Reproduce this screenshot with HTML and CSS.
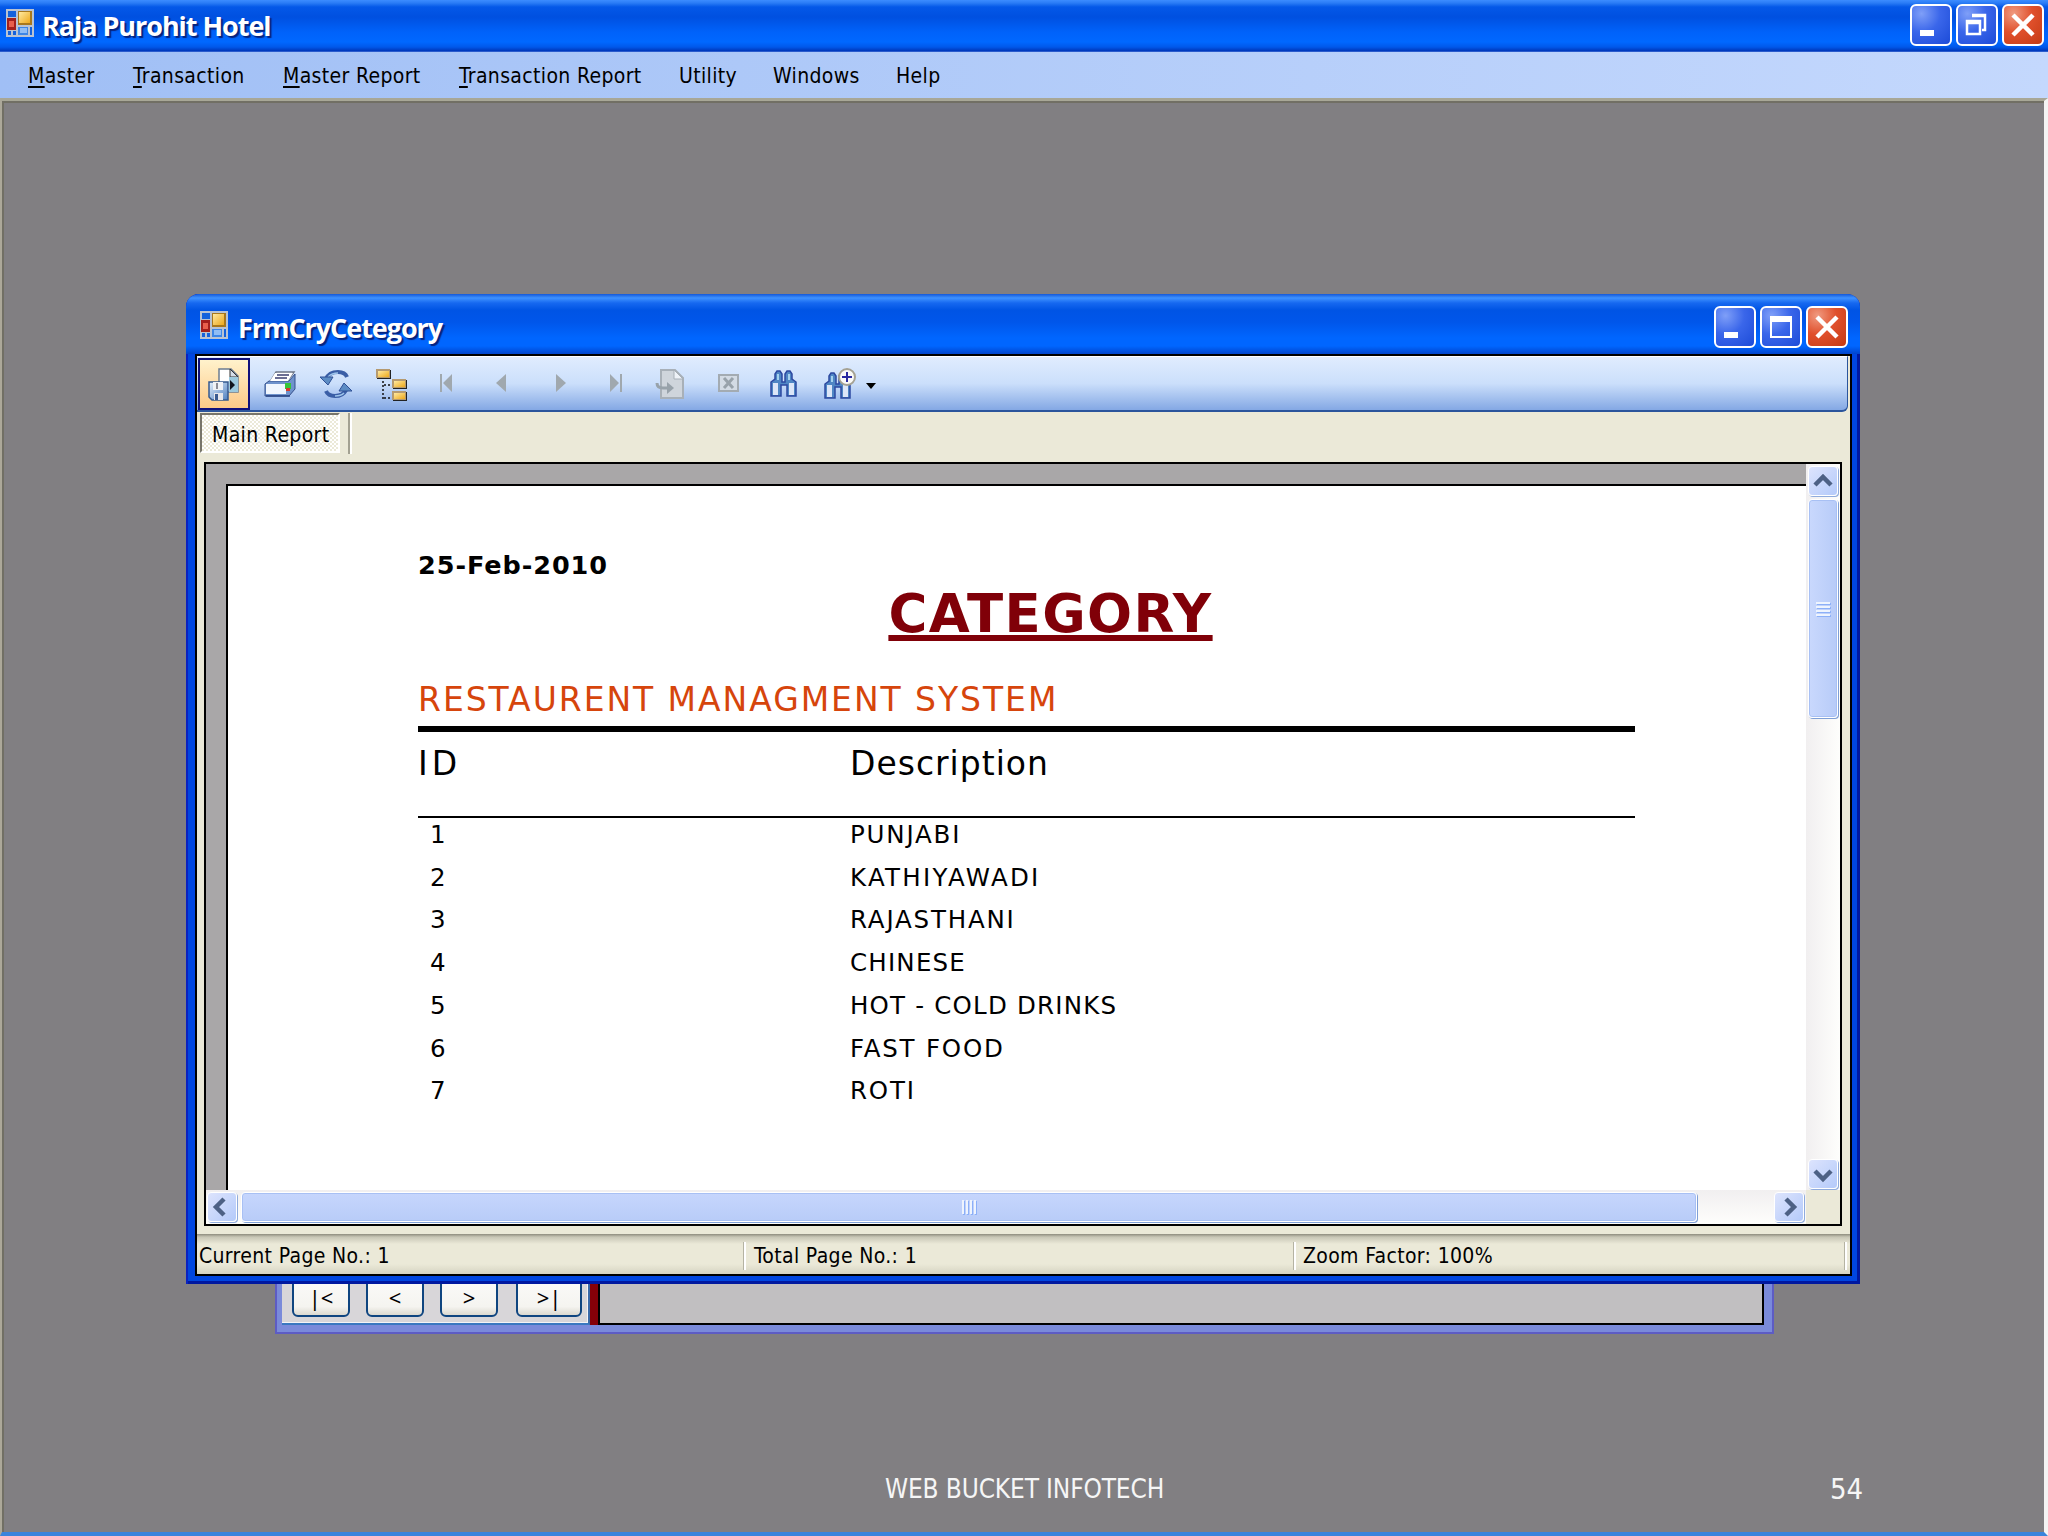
FILE: index.html
```
<!DOCTYPE html>
<html lang="en">
<head>
    <meta charset="UTF-8">
    <title>Raja Purohit Hotel</title>
    <link rel="stylesheet" href="styles.css">
</head>
<body>

    <!-- shared shapes -->
    <svg class="defs" width="0" height="0">
        <defs>
            <linearGradient id="gold" x1="0" y1="0" x2="1" y2="1">
                <stop offset="0" stop-color="#ffe9a0"/>
                <stop offset="1" stop-color="#eda91c"/>
            </linearGradient>
            <linearGradient id="steel" x1="0" y1="0" x2="1" y2="1">
                <stop offset="0" stop-color="#e4f0fc"/>
                <stop offset="1" stop-color="#4f7fc0"/>
            </linearGradient>
            <symbol id="form-icon" viewBox="0 0 28 28">
                <rect width="28" height="28" fill="#b9c3d2"/>
                <rect x="2" y="2" width="8" height="6" fill="#1462dc"/>
                <rect x="12" y="2" width="14" height="14" fill="#a8781c"/>
                <rect x="13" y="3" width="11" height="11" fill="url(#gold)"/>
                <rect x="1" y="9" width="9" height="12" fill="#a3201c"/>
                <rect x="3" y="12" width="5" height="6" fill="#e8604c"/>
                <rect x="2" y="22" width="3" height="4" fill="#1462dc"/>
                <rect x="7" y="22" width="3" height="4" fill="#1462dc"/>
                <rect x="12" y="18" width="10" height="8" fill="#3d86e6"/>
                <rect x="14" y="19" width="7" height="5" fill="#8fbdf5"/>
                <rect x="24" y="18" width="2" height="8" fill="#1462dc"/>
            </symbol>
            <symbol id="binoculars" viewBox="0 0 28 28">
                <path d="M5 9V4l2-3h3l2 3v8h3V4l2-3h3l2 3v5l4 3v14H17V15h-6v11H1V12z" fill="#4f86c4" stroke="#2c48a0" stroke-width="1.5"/>
                <path d="M3 13h5v12H3zM19 13h5v12h-5z" fill="#dce6f8"/>
                <path d="M7 4h2v6H7zM18 4h2v6h-2z" fill="#a5d2ee"/>
            </symbol>
        </defs>
    </svg>

    <div class="title-bar">
        <svg class="app-icon"><use href="#form-icon"/></svg>
        <span class="title-text">Raja Purohit Hotel</span>
        <div class="caption-buttons">
            <div class="caption-btn"><svg viewBox="0 0 42 42"><rect x="10" y="26" width="14" height="6" fill="#fff"/></svg></div>
            <div class="caption-btn"><svg viewBox="0 0 42 42"><path d="M16 11h13v15h-3M16 12h13" fill="none" stroke="#fff" stroke-width="2.5"/><path d="M11 17h13v13H11zM11 19h13" fill="none" stroke="#fff" stroke-width="2.5"/></svg></div>
            <div class="caption-btn close-btn"><svg viewBox="0 0 42 42"><path d="M11 11l20 20M31 11L11 31" stroke="#fff" stroke-width="4.5"/></svg></div>
        </div>
    </div>

    <div class="menu-bar">
        <span class="m1"><u>M</u>aster</span>
        <span class="m2"><u>T</u>ransaction</span>
        <span class="m3"><u>M</u>aster Report</span>
        <span class="m4"><u>T</u>ransaction Report</span>
        <span class="m5">Utility</span>
        <span class="m6">Windows</span>
        <span class="m7">Help</span>
    </div>

    <div class="workspace">

        <!-- form lying behind the report -->
        <div class="back-window">
            <div class="nav-panel">
                <button>|&lt;</button>
                <button>&lt;</button>
                <button>&gt;</button>
                <button class="wide">&gt;|</button>
            </div>
            <div class="grid-area"></div>
        </div>

        <div class="report-window">
            <div class="report-title">
                <svg class="app-icon"><use href="#form-icon"/></svg>
                <span class="title-text">FrmCryCetegory</span>
                <div class="caption-buttons">
                    <div class="caption-btn"><svg viewBox="0 0 42 42"><rect x="10" y="26" width="14" height="6" fill="#fff"/></svg></div>
                    <div class="caption-btn"><svg viewBox="0 0 42 42"><path d="M11 11h20v20H11z" fill="none" stroke="#fff" stroke-width="2"/><rect x="10" y="10" width="22" height="6" fill="#fff"/></svg></div>
                    <div class="caption-btn close-btn"><svg viewBox="0 0 42 42"><path d="M11 11l20 20M31 11L11 31" stroke="#fff" stroke-width="4.5"/></svg></div>
                </div>
            </div>

            <div class="client">
                <div class="toolbar">
                    <div class="tool active">
                        <svg viewBox="0 0 32 32">
                            <path d="M11 0h12l7 7v16H11z" fill="#fff" stroke="#6c7c90" stroke-width="1.5"/>
                            <path d="M22 0v8h8z" fill="#d5dde8" stroke="#333" stroke-width="1"/>
                            <path d="M21 8h9v15h-9z" fill="#9cc8dc"/>
                            <path d="M22 11l5 5-5 5z" fill="#10141c"/>
                            <path d="M1 13h19v18H4l-3-3z" fill="url(#steel)" stroke="#35598f" stroke-width="1.5"/>
                            <rect x="5" y="13" width="10" height="8" fill="#f0f2f6"/>
                            <rect x="8" y="14" width="2" height="6" fill="#8c8c96"/>
                            <rect x="6" y="24" width="9" height="7" fill="#e6e6ea"/>
                            <rect x="7" y="25" width="3" height="6" fill="#3a5a90"/>
                        </svg>
                    </div>
                    <div class="tool">
                        <svg viewBox="0 0 32 32">
                            <path d="M6 13L12 3h18l-7 10z" fill="#fff" stroke="#6d7686" stroke-width="1.5"/>
                            <path d="M14 6h12M11 9h12" stroke="#3b3f70" stroke-width="1.5"/>
                            <path d="M1 15l4-3h20l6-7v15l-6 7H1z" fill="#6f93cc" stroke="#35508c" stroke-width="1"/>
                            <path d="M6 12l5-8h18l-5 8z" fill="#fff"/>
                            <path d="M13 6h12M11 9h12" stroke="#3b3f70" stroke-width="1.5"/>
                            <rect x="2" y="15" width="20" height="10" fill="#f0f6fe"/>
                            <rect x="21" y="14" width="6" height="6" fill="#37c43a"/>
                            <rect x="22" y="19" width="4" height="3" fill="#d83a2a"/>
                            <path d="M2 27h24" stroke="#2a4484" stroke-width="1.5"/>
                        </svg>
                    </div>
                    <div class="tool">
                        <svg viewBox="0 0 32 32">
                            <path d="M6 10Q9 3 18 3q7 0 9 5" fill="none" stroke="#3a5ea6" stroke-width="4"/>
                            <path d="M8 8Q12 4 18 4" fill="none" stroke="#9dc4ea" stroke-width="1.5"/>
                            <path d="M0 8h13l-5 8z" fill="#5c8cc4" stroke="#2f5096"/>
                            <path d="M26 21q-3 6-11 6-7 0-9-5" fill="none" stroke="#3a5ea6" stroke-width="4"/>
                            <path d="M24 24q-3 3-9 3" fill="none" stroke="#9dc4ea" stroke-width="1.5"/>
                            <path d="M32 22H19l5-8z" fill="#5c8cc4" stroke="#2f5096"/>
                        </svg>
                    </div>
                    <div class="tool">
                        <svg viewBox="0 0 32 32">
                            <path d="M7 12v18M8 16h9M8 29h9" fill="none" stroke="#111" stroke-width="1.5" stroke-dasharray="2 2"/>
                            <g fill="#222"><rect x="1" y="1" width="14" height="9"/><rect x="17" y="11" width="14" height="9"/><rect x="17" y="23" width="14" height="9"/></g>
                            <g fill="#b59a70"><rect x="0" y="0" width="14" height="9"/><rect x="16" y="10" width="14" height="9"/><rect x="16" y="22" width="14" height="9"/></g>
                            <g fill="url(#gold)"><rect x="2" y="2" width="11" height="6"/><rect x="18" y="12" width="11" height="6"/><rect x="18" y="24" width="11" height="6"/></g>
                        </svg>
                    </div>
                    <div class="tool"><svg viewBox="0 0 32 32"><path d="M8 5h2v18H8zM20 5v18l-9-9z" fill="#a0a8ae"/></svg></div>
                    <div class="tool"><svg viewBox="0 0 32 32"><path d="M18 5v18l-10-9z" fill="#a0a8ae"/></svg></div>
                    <div class="tool"><svg viewBox="0 0 32 32"><path d="M12 5v18l10-9z" fill="#a0a8ae"/></svg></div>
                    <div class="tool"><svg viewBox="0 0 32 32"><path d="M20 5h2v18h-2zM10 5v18l9-9z" fill="#a0a8ae"/></svg></div>
                    <div class="tool">
                        <svg viewBox="0 0 32 32">
                            <path d="M5 1h14l8 8v20H5z" fill="#cfd5dc" stroke="#a8b0b8" stroke-width="2"/>
                            <path d="M18 1v9h9z" fill="#eef2f8" stroke="#a8b0b8"/>
                            <path d="M1 14q0 5 6 5h5" fill="none" stroke="#98a2aa" stroke-width="3"/>
                            <path d="M11 13l7 6-7 6z" fill="#98a2aa"/>
                        </svg>
                    </div>
                    <div class="tool">
                        <svg viewBox="0 0 32 32">
                            <rect x="7" y="6" width="19" height="16" fill="#d3dbe4" stroke="#a3abb2" stroke-width="2"/>
                            <path d="M12 9l9 10M21 9l-9 10" stroke="#98a2aa" stroke-width="3"/>
                        </svg>
                    </div>
                    <div class="tool"><svg viewBox="0 0 32 32"><use href="#binoculars" x="2" y="1" width="28" height="28"/></svg></div>
                    <div class="tool">
                        <svg viewBox="0 0 32 32">
                            <use href="#binoculars" x="0" y="3" width="28" height="28"/>
                            <circle cx="23" cy="8" r="8" fill="#fafaf8" stroke="#a5a294" stroke-width="2"/>
                            <path d="M18 8h10M23 3v10" stroke="#2a2aa0" stroke-width="2"/>
                        </svg>
                    </div>
                    <div class="drop-arrow"></div>
                </div>

                <div class="tab-row">
                    <div class="tab">Main Report</div>
                    <div class="tab-divider"></div>
                </div>

                <div class="viewer">
                    <div class="canvas">
                        <div class="page">
                            <div class="report-date">25-Feb-2010</div>
                            <div class="report-heading">CATEGORY</div>
                            <div class="report-company">RESTAURENT MANAGMENT SYSTEM</div>
                            <div class="report-columns">
                                <span class="c1">ID</span>
                                <span class="c2">Description</span>
                            </div>
                            <div class="report-rows">
                                <div><span>1</span><span>PUNJABI</span></div>
                                <div class="loose"><span>2</span><span>KATHIYAWADI</span></div>
                                <div><span>3</span><span>RAJASTHANI</span></div>
                                <div class="tight"><span>4</span><span>CHINESE</span></div>
                                <div class="tight"><span>5</span><span>HOT - COLD DRINKS</span></div>
                                <div><span>6</span><span>FAST FOOD</span></div>
                                <div><span>7</span><span>ROTI</span></div>
                            </div>
                        </div>
                    </div>
                    <div class="scroll-v">
                        <div class="scroll-btn"><svg viewBox="0 0 28 28"><path d="M6 18l8-8 8 8" fill="none" stroke="#4d6185" stroke-width="4.5"/></svg></div>
                        <div class="thumb-v"><i></i><i></i><i></i><i></i></div>
                        <div class="scroll-btn last"><svg viewBox="0 0 28 28"><path d="M6 11l8 8 8-8" fill="none" stroke="#4d6185" stroke-width="4.5"/></svg></div>
                    </div>
                    <div class="scroll-h">
                        <div class="scroll-btn"><svg viewBox="0 0 28 28"><path d="M16 6l-8 8 8 8" fill="none" stroke="#4d6185" stroke-width="4.5"/></svg></div>
                        <div class="thumb-h"><i></i><i></i><i></i><i></i></div>
                        <div class="scroll-btn last"><svg viewBox="0 0 28 28"><path d="M11 6l8 8-8 8" fill="none" stroke="#4d6185" stroke-width="4.5"/></svg></div>
                    </div>
                    <div class="scroll-corner"></div>
                </div>

                <div class="status-bar">
                    <span class="s1">Current Page No.: 1</span>
                    <span class="s2">Total Page No.: 1</span>
                    <span class="s3">Zoom Factor: 100%</span>
                </div>
            </div>
        </div>

        <div class="footer">
            <span class="company">WEB BUCKET INFOTECH</span>
            <span class="number">54</span>
        </div>
    </div>

</body>
</html>
```
FILE: styles.css
```
* {
    box-sizing: border-box;
}
body {
    margin: 0;
    width: 2048px;
    height: 1536px;
    overflow: hidden;
    display: flex;
    flex-direction: column;
    font-family: "DejaVu Sans Condensed", "DejaVu Sans", sans-serif;
    font-stretch: condensed;
    font-size: 21px;
    letter-spacing: 0.35px;
    color: #000;
}
.defs {
    position: absolute;
}

/* title bars */
.title-bar {
    height: 52px;
    display: flex;
    align-items: flex-start;
    padding: 4px 4px 0 6px;
    background: linear-gradient(to bottom, #3c8cff 0, #2a7cf6 3px, #0458e8 7px, #0050e0 17px, #0062fa 32px, #0068ff 42px, #0058ea 47px, #0036b8 51px, #5580e0 52px);
}
.app-icon {
    width: 28px;
    height: 28px;
    margin-top: 5px;
}
.title-text {
    font-family: "Open Sans", "Noto Sans", sans-serif;
    font-stretch: normal;
    font-weight: bold;
    font-size: 27px;
    letter-spacing: -1.05px;
    line-height: 40px;
    margin: 2px 0 0 8px;
    color: #fff;
    text-shadow: 2px 2px 1px #06237e;
    white-space: nowrap;
}
.caption-buttons {
    display: flex;
    gap: 4px;
    margin-left: auto;
}
.caption-btn {
    width: 42px;
    height: 42px;
    border: 2px solid #fff;
    border-radius: 6px;
    background: radial-gradient(circle at 25% 20%, #7f9ff8, #3a66ea 45%, #1c4bd8);
}
.caption-btn svg {
    display: block;
    width: 42px;
    height: 42px;
    margin: -2px;
}
.close-btn {
    background: radial-gradient(circle at 25% 20%, #f09a80, #e0502c 45%, #c43a14);
}

/* menu */
.menu-bar {
    height: 46px;
    display: flex;
    line-height: 46px;
    padding: 1px 0 0 28px;
    background: linear-gradient(to right, #a0bff5, #c4d8fd);
}
.menu-bar span {
    white-space: nowrap;
}
.menu-bar u {
    text-underline-offset: 3px;
    text-decoration-thickness: 2px;
}
.m1 { width: 105px; }
.m2 { width: 150px; }
.m3 { width: 176px; }
.m4 { width: 220px; }
.m5 { width: 94px; }
.m6 { width: 123px; }

.workspace {
    flex: 1;
    position: relative;
    background: #817f82;
    border-top: 3px solid #a8a797;
    border-left: 2px solid #aca899;
    border-right: 4px solid #f4f4f4;
    border-bottom: 4px solid #3a84dc;
    box-shadow: inset 1px 1px 0 1px #716f64;
}

/* form behind */
.back-window {
    position: absolute;
    left: 273px;
    top: 1100px;
    width: 1499px;
    height: 133px;
    display: flex;
    padding: 0 8px 7px 5px;
    background: #7a8ada;
    border: 2px solid #5d5cc4;
    border-top: none;
}
.nav-panel {
    width: 308px;
    display: flex;
    align-items: flex-end;
    gap: 16px;
    padding: 0 6px 6px 10px;
    background: #d8d6d9;
    border-right: 2px solid #3a6aa8;
    border-bottom: 2px solid #3a78c0;
    box-shadow: inset -1px -1px 0 #f4f4f6;
}
.nav-panel button {
    width: 58px;
    height: 60px;
    padding: 20px 0 0;
    font: 22px "Noto Sans", sans-serif;
    border: 2px solid #0f4580;
    border-radius: 6px;
    background: linear-gradient(to bottom, #fff, #f5f4f0 85%, #dcd9d0);
}
.nav-panel .wide {
    width: 66px;
    margin-left: 2px;
}
.grid-area {
    flex: 1;
    margin-left: 8px;
    background: #c1bfc1;
    border: 2px solid #000;
    box-shadow: -8px 0 0 #850008;
}

/* report window */
.report-window {
    position: absolute;
    left: 184px;
    top: 193px;
    width: 1674px;
    height: 990px;
    display: flex;
    flex-direction: column;
    padding: 0 8px 8px 9px;
    border-radius: 13px 13px 0 0;
    background: #0046e0;
    box-shadow: inset 2px 0 0 #0a22c0, inset -3px -3px 0 #0018a0;
    overflow: hidden;
}
.report-title {
    height: 60px;
    margin: 0 -8px 0 -9px;
    padding: 12px 12px 0 14px;
    display: flex;
    align-items: flex-start;
    background: linear-gradient(to bottom, #1458d8 0, #3f92ff 4px, #1668f0 9px, #0054e4 16px, #0056ea 28px, #0066ff 44px, #0066ff 52px, #0044cc 60px);
}
.report-title .title-text {
    margin-left: 10px;
}
.client {
    flex: 1;
    display: flex;
    flex-direction: column;
    border: 2px solid #000;
    background: #ebe9d8;
}
.toolbar {
    height: 56px;
    display: flex;
    align-items: center;
    margin-right: 2px;
    padding: 0 0 0 1px;
    border-top: 1px solid #fff;
    border-bottom: 2px solid #2b559c;
    border-right: 1px solid #2b559c;
    border-radius: 0 0 6px 0;
    background: linear-gradient(to bottom, #e0ecfe, #cbdffb 50%, #84a8e4);
}
.tool {
    width: 56px;
    height: 52px;
    display: flex;
    align-items: center;
    justify-content: center;
}
.tool svg {
    width: 32px;
    height: 32px;
    margin-top: 2px;
    overflow: visible;
}
.tool.active {
    width: 52px;
    margin-right: 2px;
    border: 2px solid #10107c;
    background: linear-gradient(to bottom, #fff2cc, #fdc988);
}
.drop-arrow {
    border: 5px solid transparent;
    border-top: 6px solid #000;
    border-bottom: none;
    margin: 4px 0 0 -2px;
}
.tab-row {
    height: 50px;
    display: flex;
    align-items: flex-start;
    padding: 1px 0 0 3px;
}
.tab {
    width: 140px;
    height: 40px;
    line-height: 40px;
    padding-left: 10px;
    white-space: nowrap;
    border: 2px solid #fff;
    border-top-color: #77756b;
    border-left-color: #77756b;
    background: repeating-conic-gradient(#ebe9d8 0 25%, #fff 0 50%) 0 0 / 4px 4px;
}
.tab-divider {
    width: 4px;
    height: 41px;
    margin-left: 8px;
    border-left: 2px solid #a3a192;
    border-right: 2px solid #fff;
}

.viewer {
    height: 764px;
    margin: 0 8px 0 7px;
    display: grid;
    grid-template-columns: 1fr 34px;
    grid-template-rows: 1fr 34px;
    border: 2px solid #000;
}
.canvas {
    padding: 20px 0 0 20px;
    background: #a9a7a8;
    overflow: hidden;
}
.page {
    height: 100%;
    padding: 64px 171px 0 190px;
    border: 2px solid #000;
    border-right: none;
    border-bottom: none;
    background: #fff;
    font-family: "DejaVu Sans", sans-serif;
    font-stretch: normal;
    white-space: nowrap;
}
.report-date {
    font-size: 25.5px;
    font-weight: bold;
    letter-spacing: 0.95px;
    line-height: 30px;
}
.report-heading {
    width: 1265px;
    margin-top: 4px;
    text-align: center;
    font-weight: bold;
    font-size: 53px;
    letter-spacing: 1.4px;
    line-height: 60px;
    color: #800008;
    text-decoration: underline 6px;
    text-underline-offset: 3px;
    text-decoration-skip-ink: none;
}
.report-company {
    margin-top: 36px;
    font-size: 33px;
    letter-spacing: 1.95px;
    line-height: 40px;
    color: #d6450c;
}
.report-columns {
    height: 92px;
    margin-top: 6px;
    padding-top: 12px;
    display: grid;
    grid-template-columns: 432px 1fr;
    font-size: 33px;
    letter-spacing: 1px;
    line-height: 40px;
    border-top: 6px solid #000;
    border-bottom: 2px solid #000;
}
.report-columns .c1 {
    letter-spacing: 4px;
}
.report-rows {
    margin-top: -4px;
    font-size: 24.5px;
    letter-spacing: 1.8px;
    line-height: 42.7px;
}
.report-rows div {
    display: grid;
    grid-template-columns: 420px 1fr;
    padding-left: 12px;
}
.report-rows .loose {
    letter-spacing: 2.3px;
}
.report-rows .tight {
    letter-spacing: 1.2px;
}

/* scrollbars */
.scroll-v {
    display: flex;
    flex-direction: column;
    align-items: center;
    padding: 2px 2px 1px;
    background: linear-gradient(to right, #f1eff0, #fefefc);
}
.scroll-h {
    display: flex;
    align-items: center;
    padding: 2px 2px 2px 1px;
    background: linear-gradient(to bottom, #f1eff0, #fefefc);
}
.scroll-btn {
    width: 30px;
    height: 30px;
    border: 1px solid #fff;
    border-radius: 4px;
    background: linear-gradient(135deg, #dde4fd, #b4cafa);
    box-shadow: 1px 1px 0 #8fabdc;
}
.scroll-btn svg {
    display: block;
    width: 28px;
    height: 28px;
}
.scroll-v .last {
    margin-top: auto;
}
.scroll-h .last {
    margin-left: auto;
}
.thumb-v, .thumb-h {
    display: flex;
    align-items: center;
    justify-content: center;
    gap: 2px;
    border: 1px solid #fff;
    border-radius: 4px;
    box-shadow: 1px 1px 0 #7f9fd6, inset 0 0 0 1px #a8c0f4;
}
.thumb-v {
    width: 30px;
    height: 219px;
    margin-top: 3px;
    flex-direction: column;
    background: linear-gradient(to right, #c9d8fd, #b7cbf8);
}
.thumb-h {
    width: 1456px;
    height: 30px;
    margin-left: 4px;
    background: linear-gradient(to bottom, #c6d6fd, #b8ccf8);
}
.thumb-v i {
    width: 14px;
    height: 2px;
    background: #eef4fe;
    box-shadow: 1px 1px 0 #8cb0f8;
}
.thumb-h i {
    width: 2px;
    height: 14px;
    background: #eef4fe;
    box-shadow: 1px 1px 0 #8cb0f8;
}
.scroll-corner {
    background: #ebe9d8;
}

.status-bar {
    flex: 1;
    margin-top: 8px;
    display: flex;
    align-items: center;
    padding: 3px 3px 0 2px;
    background: linear-gradient(to bottom, #8e8c7e 0, #c8c6b6 3px, #ebe9d8 10px, #ebe9d8 30px, #d6d4c2 100%);
}
.status-bar span {
    height: 28px;
    line-height: 29px;
    white-space: nowrap;
    border-right: 2px solid #fff;
    box-shadow: inset -1px 0 0 #b5b3a3;
}
.s1 { width: 547px; }
.s2 { width: 550px; padding-left: 8px; }
.s3 { flex: 1; padding-left: 7px; }

.footer {
    position: absolute;
    left: 883px;
    top: 1368px;
    display: flex;
    align-items: center;
    line-height: 40px;
    letter-spacing: -0.15px;
    color: #f6f6f6;
    white-space: nowrap;
}
.company {
    width: 945px;
    font-size: 26px;
}
.number {
    font-size: 29px;
}
```
